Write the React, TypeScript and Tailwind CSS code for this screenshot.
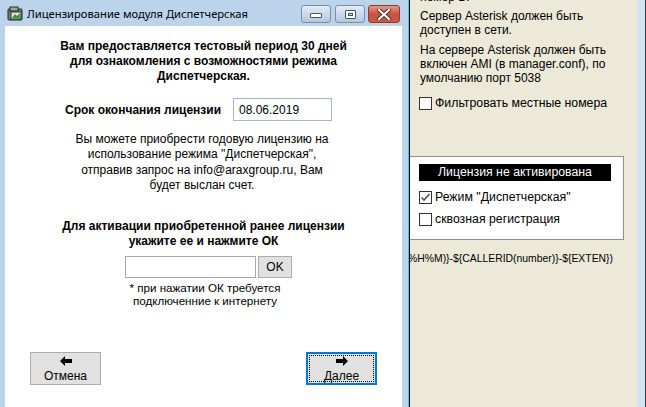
import React from "react";

const ui = { fontFamily: '"Liberation Sans", Arial, sans-serif' };
const caption = { fontFamily: '"Noto Sans", "Open Sans", sans-serif' };

const formula = "%H%M)}-${CALLERID(number)}-${EXTEN})";

function AppIcon() {
  return (
    <svg width="17" height="16" viewBox="0 0 17 16" className="shrink-0">
      <rect x="1" y="3" width="14" height="11" rx="1" fill="#6e7f73" stroke="#1f2a22" />
      <rect x="3" y="1" width="8" height="4" fill="#9aa79e" stroke="#1f2a22" />
      <rect x="4" y="6" width="10" height="7" fill="#dfe8e0" stroke="#2c3a2f" />
      <path d="M5 12 L8 8 L10 10 L13 7 L13 12 Z" fill="#2f9a3a" />
    </svg>
  );
}

function Arrow({ dir }: { dir: "left" | "right" }) {
  return (
    <svg width="12" height="10" viewBox="0 0 12 10" className="shrink-0">
      {dir === "left" ? (
        <path d="M0 5 L5 0 L5 3 L12 3 L12 7 L5 7 L5 10 Z" fill="#000" />
      ) : (
        <path d="M12 5 L7 0 L7 3 L0 3 L0 7 L7 7 L7 10 Z" fill="#000" />
      )}
    </svg>
  );
}

function CheckBox({ checked }: { checked?: boolean }) {
  return (
    <span className="w-[13px] h-[13px] border border-[#333] bg-white flex items-center justify-center shrink-0">
      {checked && (
        <svg width="11" height="11" viewBox="0 0 11 11">
          <path d="M1.5 5.5 L4 8 L9.5 2" fill="none" stroke="#555" strokeWidth="1.6" />
        </svg>
      )}
    </span>
  );
}

function CaptionButtons() {
  return (
    <div className="flex items-start pt-[5px]">
      <div className="w-[30px] h-[18px] rounded-[3px] border border-[#7d8ea5] bg-gradient-to-b from-[#e4ecf6] to-[#b5c7de] flex items-center justify-center">
        <span className="w-[12px] h-[5px] bg-white border border-[#44546a] rounded-[1px] mt-[3px]" />
      </div>
      <div className="ml-[4px] w-[30px] h-[18px] rounded-[3px] border border-[#7d8ea5] bg-gradient-to-b from-[#e4ecf6] to-[#b5c7de] flex items-center justify-center">
        <span className="w-[11px] h-[9px] bg-white border border-[#44546a] rounded-[1px] flex items-center justify-center">
          <span className="w-[5px] h-[3px] bg-[#c9d6e8] border border-[#44546a]" />
        </span>
      </div>
      <div className="ml-[3px] w-[32px] h-[18px] rounded-[3px] border border-[#8c3b30] bg-gradient-to-b from-[#e49a8c] via-[#c9503e] to-[#c85a47] flex items-center justify-center">
        <svg width="14" height="11" viewBox="0 0 14 11">
          <path d="M2 1 L12 10 M12 1 L2 10" stroke="#4a2620" strokeWidth="4" strokeLinecap="round" />
          <path d="M2 1 L12 10 M12 1 L2 10" stroke="#fff" strokeWidth="2.2" strokeLinecap="round" />
        </svg>
      </div>
    </div>
  );
}

function Dialog() {
  return (
    <div className="w-[408px] h-full bg-[#bcd3ec] flex flex-col shrink-0">
      <div className="h-[26px] flex items-start justify-between pl-[7px] pr-[8px]">
        <div className="flex items-center gap-[3px] pt-[6px]">
          <AppIcon />
          <span className="text-[11.2px] leading-[16px] text-black" style={caption}>
            Лицензирование модуля Диспетчерская
          </span>
        </div>
        <CaptionButtons />
      </div>
      <div className="ml-[5px] mr-[6px] flex-1 bg-white flex flex-col text-black" style={ui}>
        <div className="pt-[13px] text-center text-[12px] font-bold leading-[15px]">
          <div>Вам предоставляется тестовый период 30 дней</div>
          <div>для ознакомления с возможностями режима</div>
          <div>Диспетчерская.</div>
        </div>
        <div className="flex items-center mt-[14px] ml-[60px]">
          <span className="text-[12px] font-bold w-[168px]">Срок окончания лицензии</span>
          <div className="w-[99px] h-[23px] border border-[#a7b5c9] flex items-center pl-[5px] text-[12px]">
            08.06.2019
          </div>
        </div>
        <div className="mt-[11px] ml-[47px] w-[300px] text-center text-[12px] leading-[15.3px]">
          <div>Вы можете приобрести годовую лицензию на</div>
          <div>использование режима "Диспетчерская",</div>
          <div>отправив запрос на info@araxgroup.ru, Вам</div>
          <div>будет выслан счет.</div>
        </div>
        <div className="mt-[26px] text-center text-[12px] font-bold leading-[15px]">
          <div>Для активации приобретенной ранее лицензии</div>
          <div>укажите ее и нажмите ОК</div>
        </div>
        <div className="mt-[7px] ml-[120px] flex items-center gap-[2px]">
          <div className="w-[131px] h-[22px] border border-[#a9a9a9] bg-white" />
          <div className="w-[34px] h-[22px] border border-[#adadad] bg-[#e1e1e1] flex items-center justify-center text-[12px]">
            OK
          </div>
        </div>
        <div className="mt-[4px] ml-[5px] w-[390px] text-center text-[11.6px] leading-[12.5px]">
          <div>* при нажатии ОК требуется</div>
          <div>подключенние к интернету</div>
        </div>
        <div className="mt-[45px] flex ml-[25px] gap-[205px]">
          <div className="w-[71px] h-[33px] border border-[#adadad] bg-[#e1e1e1] flex flex-col items-center pt-[3px]">
            <Arrow dir="left" />
            <span className="text-[12px] leading-[14px] mt-[3px]">Отмена</span>
          </div>
          <div className="w-[71px] h-[33px] border-2 border-[#0078d7] bg-[#e1e1e1] p-[1px]">
            <div className="w-full h-full border border-dotted border-black flex flex-col items-center">
              <Arrow dir="right" />
              <span className="text-[12px] leading-[14px] mt-[3px]">Далее</span>
            </div>
          </div>
        </div>
      </div>
    </div>
  );
}

function BackWindow() {
  return (
    <div className="flex-1 bg-[#ece9d8] flex flex-col text-black overflow-hidden" style={ui}>
      <div className="pl-[10px] text-[12px] leading-[14px]">
        <div className="-mt-[10px]">номер В.</div>
        <div className="mt-[5px]">Сервер Asterisk должен быть</div>
        <div>доступен в сети.</div>
        <div className="mt-[6px]">На сервере Asterisk должен быть</div>
        <div>включен AMI (в manager.conf), по</div>
        <div>умолчанию порт 5038</div>
      </div>
      <div className="mt-[11px] pl-[9px] flex items-center gap-[3px] text-[12.3px] leading-[14px]">
        <CheckBox />
        <span>Фильтровать местные номера</span>
      </div>
      <div className="mt-[46px] w-[214px] h-[84px] bg-white border border-l-0 border-[#8f8f8f] pt-[7px] pl-[9px]">
        <div className="w-[192px] h-[17px] bg-black text-white text-[12.3px] flex items-center justify-center">
          Лицензия не активирована
        </div>
        <div className="mt-[9px] flex items-center gap-[3px] text-[12.3px] leading-[14px]">
          <CheckBox checked />
          <span>Режим "Диспетчерская"</span>
        </div>
        <div className="mt-[8px] flex items-center gap-[3px] text-[12.3px] leading-[14px]">
          <CheckBox />
          <span>сквозная регистрация</span>
        </div>
      </div>
      <div className="mt-[12px] -ml-[2px] text-[10.4px] leading-[14px] whitespace-nowrap">{formula}</div>
    </div>
  );
}

export default function App() {
  return (
    <div className="w-[646px] h-[407px] flex overflow-hidden bg-[#ece9d8]">
      <Dialog />
      <div className="w-[1px] h-full bg-[#4fc3f0]" />
      <div className="w-[1px] h-full bg-black" />
      <BackWindow />
      <div className="w-[8px] h-full bg-[#d4e3f5]" />
      <div className="w-[1px] h-full bg-[#3a3a3a]" />
    </div>
  );
}
